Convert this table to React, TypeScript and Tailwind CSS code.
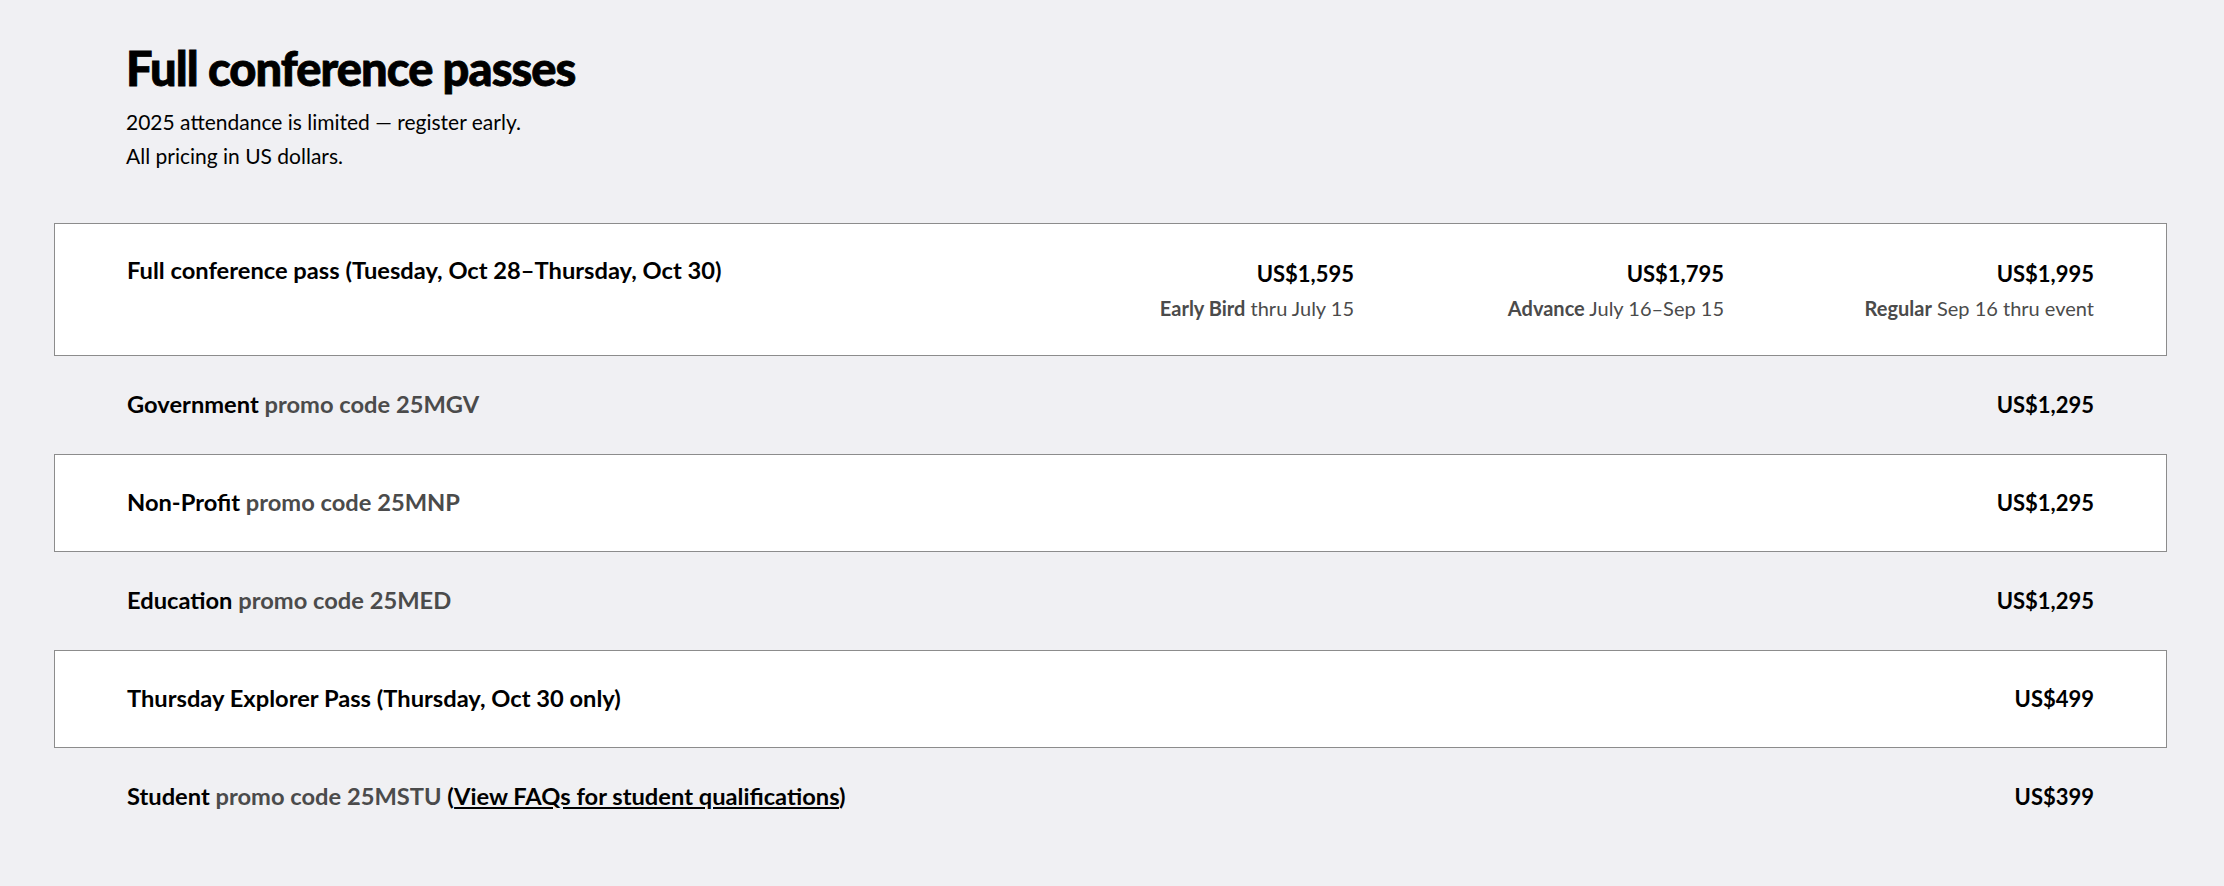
const font = { fontFamily: 'Lato, "Open Sans", sans-serif' };

type Row = {
  label: string;
  promo?: string;
  price: string;
  boxed: boolean;
  faq?: boolean;
};

const rows: Row[] = [
  { label: 'Government', promo: 'promo code 25MGV', price: 'US$1,295', boxed: false },
  { label: 'Non-Profit', promo: 'promo code 25MNP', price: 'US$1,295', boxed: true },
  { label: 'Education', promo: 'promo code 25MED', price: 'US$1,295', boxed: false },
  { label: 'Thursday Explorer Pass (Thursday, Oct 30 only)', price: 'US$499', boxed: true },
  { label: 'Student', promo: 'promo code 25MSTU', price: 'US$399', boxed: false, faq: true },
];

const tiers = [
  { price: 'US$1,595', name: 'Early Bird', dates: 'thru July 15' },
  { price: 'US$1,795', name: 'Advance', dates: 'July 16–Sep 15' },
  { price: 'US$1,995', name: 'Regular', dates: 'Sep 16 thru event' },
];

export default function App() {
  return (
    <div className="min-h-screen bg-[#f0f0f3] pl-[54px] pr-[57px] pt-[43px] text-black" style={font}>
      <div className="pl-[72px]">
        <h1 className="text-[47px] font-black leading-[1.1] tracking-[-0.02em] [-webkit-text-stroke:0.8px_black]">
          Full conference passes
        </h1>
        <p className="mt-[10px] text-[21px] leading-[34px]">2025 attendance is limited — register early.</p>
        <p className="text-[21px] leading-[34px]">All pricing in US dollars.</p>
      </div>

      <div className="mt-[50px]">
        <div className="flex border border-[#8c8c8c] bg-white px-[72px] pt-[35px] pb-[32px]">
          <div className="-mt-[4px] flex-1 text-[23.7px] font-bold leading-[30px]">
            Full conference pass (Tuesday, Oct 28–Thursday, Oct 30)
          </div>
          {tiers.map((t) => (
            <div key={t.price} className="w-[370px] text-right">
              <div className="text-[22px] font-bold leading-[30px]">{t.price}</div>
              <div className="mt-[4px] text-[20px] leading-[30px] text-[#4b4b4b]">
                <span className="font-bold">{t.name}</span> {t.dates}
              </div>
            </div>
          ))}
        </div>

        {rows.map((r) => (
          <div
            key={r.label}
            className={
              r.boxed
                ? 'flex h-[98px] items-center justify-between border border-[#8c8c8c] bg-white px-[72px]'
                : 'flex h-[98px] items-center justify-between border border-transparent px-[72px]'
            }
          >
            <div className="text-[23.7px] font-bold">
              {r.label}
              {r.promo && <span className="text-[#4b4b4b]"> {r.promo}</span>}
              {r.faq && (
                <span>
                  {' '}(<a href="#" className="underline underline-offset-2">View FAQs for student qualifications</a>)
                </span>
              )}
            </div>
            <div className="text-[22px] font-bold">{r.price}</div>
          </div>
        ))}
      </div>
    </div>
  );
}
